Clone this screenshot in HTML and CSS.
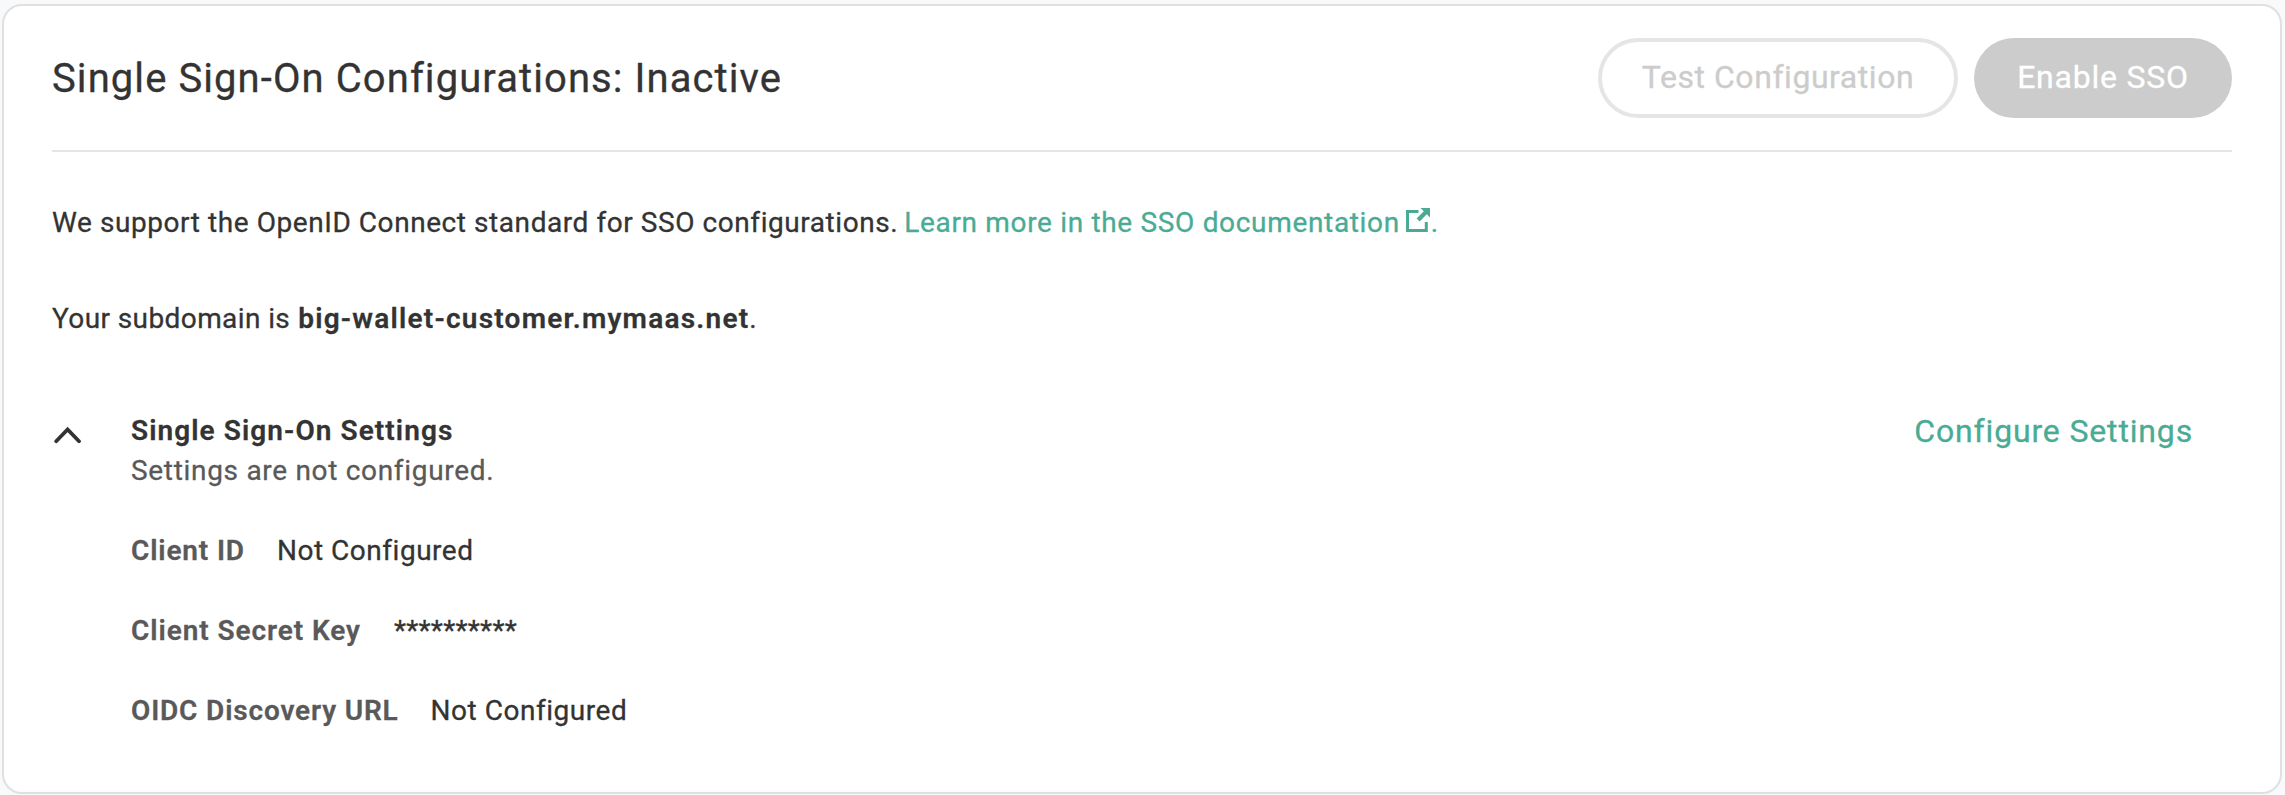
FILE: index.html
```html
<!DOCTYPE html>
<html lang="en">
<head>
<meta charset="utf-8">
<title>Single Sign-On Configurations</title>
<link rel="stylesheet" href="styles.css">
</head>
<body>
<main class="card">
  <header class="card-header">
    <h1 class="title">Single Sign-On Configurations: Inactive</h1>
    <div class="actions">
      <button class="btn btn-outline" disabled>Test Configuration</button>
      <button class="btn btn-solid" disabled>Enable SSO</button>
    </div>
  </header>
  <p class="line support">
    <span class="support-text">We support the OpenID Connect standard for SSO configurations.</span>
    <a class="doc-link"><span class="doc-text">Learn more in the SSO documentation</span><svg class="ext-icon" width="24" height="24" viewBox="0 0 24 24"><path d="M12.5 3.5H1.5V22.5H20.3V14" fill="none" stroke="currentColor" stroke-width="3"/><path d="M14.5 0H24V9.5L20.8 6.3L13.6 13.5L10.6 10.5L17.8 3.3Z" fill="currentColor"/></svg><span>.</span></a>
  </p>
  <p class="line subdomain"><span class="sub-text">Your subdomain is</span><strong class="domain">big-wallet-customer.mymaas.net</strong><span>.</span></p>
  <section class="settings">
    <svg class="chevron" width="28" height="18" viewBox="0 0 28 18"><path d="M2.2 15.2L13.6 3.4L25 15.2" fill="none" stroke="currentColor" stroke-width="3.8" stroke-linecap="round" stroke-linejoin="miter"/></svg>
    <div class="details">
      <h2 class="settings-title">Single Sign-On Settings</h2>
      <p class="status">Settings are not configured.</p>
      <dl class="fields">
        <div class="field"><dt class="label label-id">Client ID</dt><dd class="value">Not Configured</dd></div>
        <div class="field"><dt class="label label-key">Client Secret Key</dt><dd class="value secret">**********</dd></div>
        <div class="field"><dt class="label label-url">OIDC Discovery URL</dt><dd class="value">Not Configured</dd></div>
      </dl>
    </div>
    <a class="configure">Configure Settings</a>
  </section>
</main>
</body>
</html>
```
FILE: styles.css
```css
* { box-sizing: border-box; margin: 0; padding: 0; }
body {
  height: 795px;
  padding: 4px 3px 1px 2px;
  overflow: hidden;
  background: #f8f9fb;
  color: #333;
  font: 400 28px/40px Roboto, "Liberation Sans", sans-serif;
  white-space: nowrap;
  -webkit-text-stroke: .3px currentColor;
}
.card {
  height: 790px;
  padding: 32px 48px;
  border: 2px solid #dfe0e1;
  border-radius: 20px;
  background: #fff;
}
.card-header {
  display: flex;
  align-items: center;
  justify-content: space-between;
  height: 114px;
  padding-bottom: 32px;
  border-bottom: 2px solid #e5e5e5;
}
.title { padding-top: 2px; font-size: 40px; line-height: 48px; font-weight: 400; letter-spacing: 1.08px; }
.actions { display: flex; gap: 16px; }
.btn {
  height: 80px;
  padding-bottom: 2px;
  border-radius: 40px;
  font: 400 32px/38px Roboto, "Liberation Sans", sans-serif;
  -webkit-text-stroke: .3px currentColor;
}
.btn-outline { width: 360px; border: 4px solid #e5e5e5; background: #fff; color: #ccc; letter-spacing: .55px; }
.btn-solid { width: 258px; border: 0; background: #ccc; color: #fff; letter-spacing: .78px; }
.line { display: flex; height: 40px; }
.support { margin-top: 51px; gap: 6px; }
.support-text { letter-spacing: .565px; }
.doc-link { display: flex; color: #4aab94; }
.doc-text { letter-spacing: .67px; }
.ext-icon { margin: 5px 1px 0 6px; }
.subdomain { margin-top: 56px; }
.sub-text { margin-right: 8px; letter-spacing: .4px; }
.domain { font-weight: 600; letter-spacing: 1.23px; }
.settings { display: flex; margin-top: 72px; }
.chevron { margin: 15px 49px 0 2px; }
.settings-title { font-size: 28px; font-weight: 600; letter-spacing: 1.08px; }
.status { color: #595959; letter-spacing: .69px; }
.fields { display: grid; gap: 40px; margin-top: 40px; }
.field { display: flex; gap: 32px; height: 40px; }
.label { color: #595959; font-weight: 600; }
.label-id { letter-spacing: .85px; }
.label-key { letter-spacing: .93px; }
.label-url { letter-spacing: .84px; }
.value { letter-spacing: .53px; }
.secret { padding-left: 1px; letter-spacing: .25px; }
.configure { margin: 0 39px 0 auto; color: #4aab94; font-size: 32px; letter-spacing: .84px; }
```
